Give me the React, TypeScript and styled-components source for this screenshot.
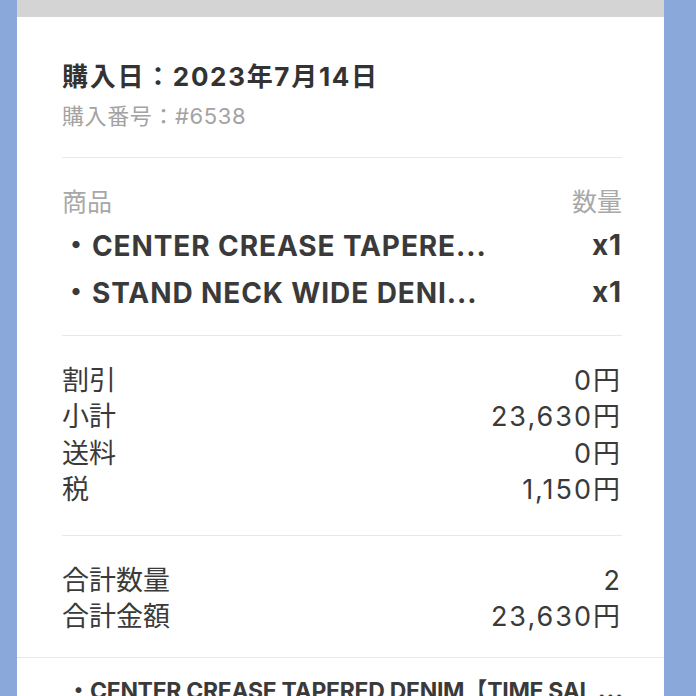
import styled, { createGlobalStyle } from 'styled-components'

const GlobalStyle = createGlobalStyle`
  html, body {
    margin: 0;
    padding: 0;
    background: #8aa8d9;
    font-family: "Inter", "Noto Sans CJK JP", sans-serif;
    color: #333;
  }
`

const Page = styled.div`
  width: 696px;
  height: 696px;
  overflow: hidden;
  padding-left: 17px;
  box-sizing: border-box;
`

const Card = styled.div`
  width: 647px;
  background: #fff;
  min-height: 696px;
`

const TopBar = styled.div`
  height: 17px;
  background: #d4d4d4;
`

const Body = styled.div`
  padding: 0 42px 0 45px;
`

const Section = styled.div<{ $top: number; $bottom: number; $last?: boolean }>`
  padding-top: ${(p) => p.$top}px;
  padding-bottom: ${(p) => p.$bottom}px;
  border-bottom: ${(p) => (p.$last ? 'none' : '1px solid #e8e8e8')};
`

const Title = styled.div`
  font-size: 26px;
  font-weight: 700;
  line-height: 34px;
  letter-spacing: 1.7px;
  color: #333;
`

const Sub = styled.div`
  margin-top: 8px;
  font-size: 22px;
  line-height: 28px;
  letter-spacing: 0.6px;
  color: #a3a3a3;
`

const Row = styled.div`
  display: flex;
  justify-content: space-between;
  align-items: center;
`

const HeadRow = styled(Row)`
  font-size: 25px;
  line-height: 34px;
  color: #a8a8a8;
  margin-bottom: 3px;
`

const ItemRow = styled(Row)`
  font-size: 28px;
  font-weight: 700;
  line-height: 45px;
  letter-spacing: 0.9px;
  color: #3a3a3a;
`

const Bullet = styled.span`
  display: inline-block;
  width: 30px;
  letter-spacing: 0;
  font-family: "Noto Sans CJK JP", sans-serif;
`

const ItemName = styled.span`
  flex: 1;
  white-space: nowrap;
`

const LineRow = styled(Row)`
  font-size: 27px;
  line-height: 36.4px;
  color: #3a3a3a;
`

const Amount = styled.span`
  letter-spacing: 2px;
`

const Divider = styled.div`
  height: 1px;
  background: #e8e8e8;
`

const NextItem = styled.div`
  padding: 15px 0 0 50px;
  font-size: 23px;
  font-weight: 700;
  line-height: 32px;
  letter-spacing: -0.3px;
  white-space: nowrap;
  overflow: hidden;
  color: #3a3a3a;
`

const CjkGlyph = styled.span`
  font-family: "Noto Sans CJK JP", sans-serif;
  letter-spacing: 0;
`

const items = [
  { name: 'CENTER CREASE TAPERE...', qty: 'x1' },
  { name: 'STAND NECK WIDE DENI...', qty: 'x1' },
]

const lines = [
  { label: '割引', value: '0円' },
  { label: '小計', value: '23,630円' },
  { label: '送料', value: '0円' },
  { label: '税', value: '1,150円' },
]

const totals = [
  { label: '合計数量', value: '2' },
  { label: '合計金額', value: '23,630円' },
]

export default function App() {
  return (
    <>
      <GlobalStyle />
      <Page>
        <Card>
          <TopBar />
          <Body>
            <Section $top={43} $bottom={27}>
              <Title>購入日：2023年7月14日</Title>
              <Sub>購入番号：#6538</Sub>
            </Section>
            <Section $top={27} $bottom={19}>
              <HeadRow>
                <span>商品</span>
                <span>数量</span>
              </HeadRow>
              {items.map((it) => (
                <ItemRow key={it.name}>
                  <ItemName>
                    <Bullet>・</Bullet>
                    {it.name}
                  </ItemName>
                  <span>{it.qty}</span>
                </ItemRow>
              ))}
            </Section>
            <Section $top={27} $bottom={26}>
              {lines.map((l) => (
                <LineRow key={l.label}>
                  <span>{l.label}</span>
                  <Amount>{l.value}</Amount>
                </LineRow>
              ))}
            </Section>
            <Section $top={27} $bottom={22} $last>
              {totals.map((l) => (
                <LineRow key={l.label}>
                  <span>{l.label}</span>
                  <Amount>{l.value}</Amount>
                </LineRow>
              ))}
            </Section>
          </Body>
          <Divider />
          <NextItem>
            <CjkGlyph>・</CjkGlyph>CENTER CREASE TAPERED DENIM<CjkGlyph>【</CjkGlyph>TIME SAL
            <CjkGlyph> ⋯</CjkGlyph>
          </NextItem>
        </Card>
      </Page>
    </>
  )
}
